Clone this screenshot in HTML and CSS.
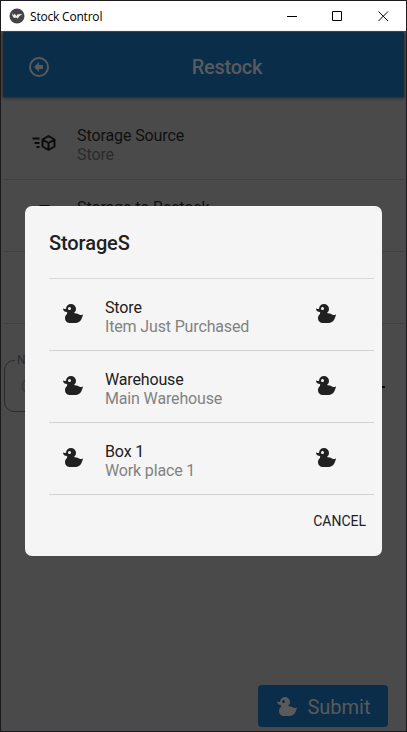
FILE: index.html
```html
<!DOCTYPE html>
<html lang="en">
<head>
<meta charset="utf-8">
<title>Stock Control</title>
<link rel="stylesheet" href="styles.css">
</head>
<body>
<svg width="0" height="0" class="defs">
  <symbol id="duck" viewBox="0 0 24 24"><path d="M8.5,5A1.5,1.5 0 0,0 7,6.5A1.5,1.5 0 0,0 8.5,8A1.5,1.5 0 0,0 10,6.5A1.5,1.5 0 0,0 8.5,5M10,2A5,5 0 0,1 15,7C15,8.7 14.15,10.2 12.86,11.1C14.44,11.25 16.22,11.61 18,12.5C21,14 22,12 22,12C22,12 21,21 15,21H9C9,21 4,21 4,16C4,13 7,12 6,10C2,10 2,6.5 2,6.5C3,7 4.24,7 5,6.65C5.19,4.05 7.36,2 10,2Z"/></symbol>
</svg>
<div class="window">
  <header class="titlebar">
    <svg class="logo" viewBox="0 0 16 16"><circle cx="8" cy="8" r="7.5" fill="#444"/><path d="M3 5 5 7.500 5.500 5.500 7.500 8 8.500 6.300 13.500 6 10.500 8 8.500 10.800 7.500 9.500 5 10 3.5 8Z" fill="#eee"/></svg>
    <span class="title">Stock Control</span>
    <svg class="controls" viewBox="0 0 102 11"><path d="M0 5.5H10M45.5 .5H54.500V9.500H45.500ZM91.500 .5 101 10M101 .5 91.500 10"/></svg>
  </header>
  <main class="app">
    <div class="appbar">
      <svg class="back" viewBox="0 0 24 24"><circle cx="12" cy="12" r="9" fill="none" stroke="currentColor" stroke-width="2"/><path d="M7 12 12 7V10H16V14H12V17Z" fill="currentColor"/></svg>
      <h1>Restock</h1>
    </div>
    <div class="source">
      <svg class="cube" viewBox="0 0 24 24"><path d="M1 7.500H8M3 12H8M5 16H8M17 5 23 8.500V15.500L17 19 11 15.500V8.500ZM11 8.500 17 12 23 8.500M17 12V19"/></svg>
      <div><p>Storage Source</p><p class="sub">Store</p></div>
    </div>
    <div class="source">
      <svg class="cube" viewBox="0 0 24 24"><path d="M8 3H18M9 3V20H18V3"/></svg>
      <div><p>Storage to Restock</p><p class="sub">&nbsp;</p></div>
    </div>
    <div class="source"></div>
    <div class="amount">
      <div class="field"><span class="label">N</span><span class="hint">0</span></div>
      <span class="minus"></span>
    </div>
    <button class="submit"><svg><use href="#duck"/></svg>Submit</button>
  </main>
  <section class="dialog">
    <h2>StorageS</h2>
    <ul>
      <li><svg><use href="#duck"/></svg><div><p>Store</p><p class="sub">Item Just Purchased</p></div><svg><use href="#duck"/></svg></li>
      <li><svg><use href="#duck"/></svg><div><p>Warehouse</p><p class="sub">Main Warehouse</p></div><svg><use href="#duck"/></svg></li>
      <li><svg><use href="#duck"/></svg><div><p>Box 1</p><p class="sub">Work place 1</p></div><svg><use href="#duck"/></svg></li>
    </ul>
    <button class="cancel">CANCEL</button>
  </section>
</div>
</body>
</html>
```
FILE: styles.css
```css
* { box-sizing: border-box; margin: 0; padding: 0; }
body { width: 407px; height: 732px; overflow: hidden; font-family: Roboto, sans-serif; }
.defs { position: absolute; }
.window {
  position: relative;
  width: 407px;
  height: 732px;
  border: 1px solid #1c1a1f;
  background: #4a4a4a;
  display: flex;
  flex-direction: column;
}
.titlebar { height: 30px; background: #fff; display: flex; align-items: center; padding: 0 17px 0 8px; flex: none; }
.logo { width: 16px; height: 16px; }
.title { font: 12px "Open Sans", sans-serif; letter-spacing: -0.2px; margin-left: 5px; color: #000; flex: 1; }
.controls { width: 102px; height: 11px; fill: none; stroke: #000; stroke-width: 1; }
.app { flex: 1; display: flex; flex-direction: column; padding: 1px 2px 4px; min-height: 0; }
.appbar {
  height: 65px;
  flex: none;
  background: #0a2d49;
  color: #585b5e;
  display: flex;
  align-items: center;
  padding: 4px 24px 0;
  box-shadow: 0 1px 3px #222;
}
.back { width: 24px; height: 24px; }
.appbar h1 { flex: 1; font-size: 20px; line-height: 24px; font-weight: 500; letter-spacing: -0.25px; text-align: center; padding-left: 23px; }
.source {
  height: 72px;
  flex: none;
  margin: 0 1px;
  border-bottom: 1px solid #414141;
  display: flex;
  align-items: center;
  padding: 2px 0 0 27px;
  color: #101010;
  font-size: 16px;
  line-height: 19px;
  letter-spacing: -0.1px;
}
.appbar + .source { margin-top: 11px; }
.cube { width: 24px; height: 24px; margin: -4px 22px 0 0; fill: none; stroke: #0c0c0c; stroke-width: 2; stroke-linejoin: round; overflow: visible; transform: translateX(0.5px); }
.source .sub { color: #2b2b2b; }
.amount { display: flex; align-items: center; justify-content: space-between; margin: 36px 19px 0 1px; }
.field { position: relative; width: 300px; height: 52px; border: 1px solid #2b2b2b; border-radius: 10px; padding: 16px; color: #3b3b3b; font-size: 16px; }
.label { position: absolute; left: 10px; top: -8px; background: #4a4a4a; padding: 0 2px; font-size: 12px; color: #2b2b2b; }
.minus { width: 14px; height: 2px; background: #080808; margin-top: 2px; }
.submit {
  margin: auto 16.5px 0 auto;
  width: 130px;
  height: 42px;
  border: 0;
  border-radius: 4px;
  background: #0a2d49;
  color: #5a5a5a;
  font: 20px Roboto, sans-serif;
  display: flex;
  align-items: center;
  justify-content: center;
  gap: 8px;
  padding: 1px 0 0 1px;
}
.submit svg { width: 24px; height: 24px; fill: currentColor; }
.dialog {
  position: absolute;
  left: 24px;
  top: 205px;
  width: 357px;
  height: 350px;
  border-radius: 7px;
  background: #f5f5f5;
  color: #212121;
  padding: 24px 8px 0 24px;
  display: flex;
  flex-direction: column;
}
.dialog h2 { font-size: 20px; line-height: 26px; font-weight: 500; letter-spacing: -0.1px; }
.dialog ul { list-style: none; margin-top: 22px; border-top: 1px solid #d9d9d9; }
.dialog li {
  height: 72px;
  border-bottom: 1px solid #d2d2d2;
  display: flex;
  align-items: center;
  padding: 5px 36px 0 12px;
  font-size: 16px;
  line-height: 19px;
  letter-spacing: -0.15px;
}
.dialog li div { flex: 1; margin-left: 20px; }
.dialog li svg { width: 24px; height: 24px; fill: #212121; margin-top: -6px; }
.dialog .sub { color: #828282; }
.cancel { border: 0; background: none; color: #212121; font: 14px/20px Roboto, sans-serif; align-self: flex-end; margin-top: 16px; padding: 0 8px; }
```
